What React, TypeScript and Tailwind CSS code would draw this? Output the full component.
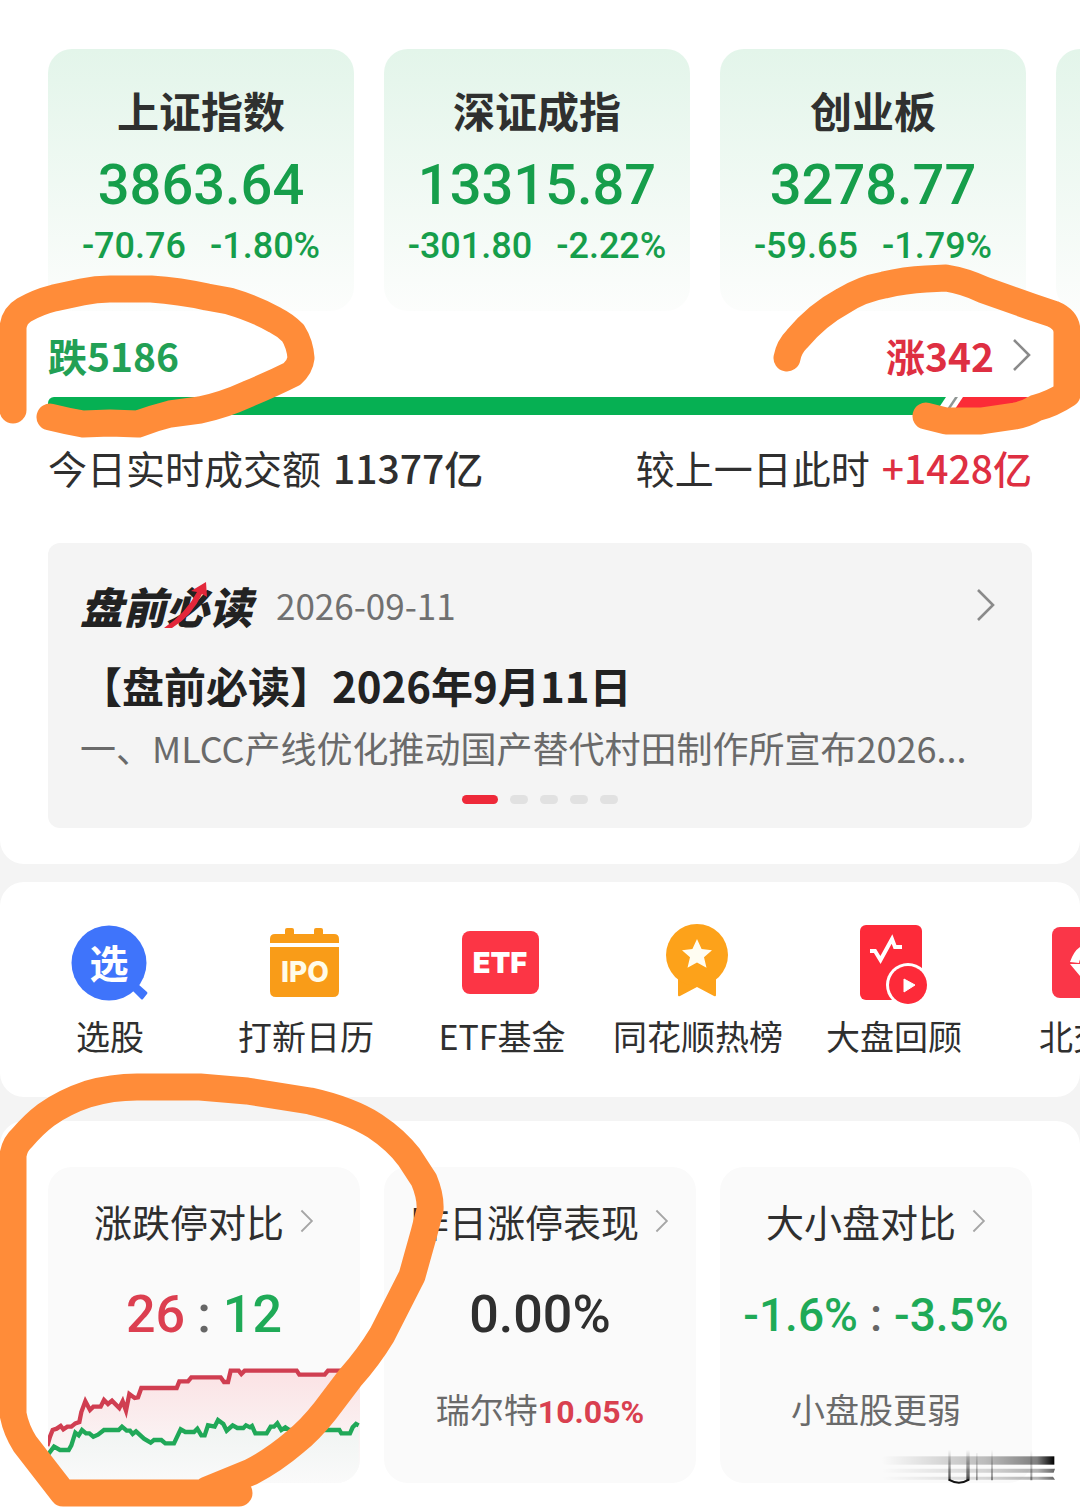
import React from 'react';

const indexes = [
  { name: '上证指数', value: '3863.64', change: '-70.76', percent: '-1.80%' },
  { name: '深证成指', value: '13315.87', change: '-301.80', percent: '-2.22%' },
  { name: '创业板', value: '3278.77', change: '-59.65', percent: '-1.79%' },
];

const Chevron: React.FC<{ className: string }> = ({ className }) => (
  <svg className={className} viewBox="0 0 20 34" fill="none" stroke="currentColor" strokeWidth="2.6" aria-hidden="true">
    <path d="M2 2l15 15L2 32" />
  </svg>
);

const IndexCards = () => (
  <div className="flex gap-[30px] overflow-hidden pl-12">
    {indexes.map((item) => (
      <a
        key={item.name}
        href="#"
        className="w-[306px] shrink-0 rounded-3xl bg-linear-to-b from-[#e3f5ea] to-[#fcfdfc] pt-8 pb-11 text-center text-[#169e4b]"
      >
        <div className="text-[42px] leading-[58px] font-bold text-[#2f302f]">{item.name}</div>
        <div className="mt-[6px] font-[Roboto,sans-serif] text-[56px] leading-[80px] font-medium">{item.value}</div>
        <div className="flex justify-center gap-6 font-[Roboto,sans-serif] text-[36px] leading-[42px] font-medium">
          <span>{item.change}</span>
          <span>{item.percent}</span>
        </div>
      </a>
    ))}
    <div className="w-[306px] shrink-0 rounded-3xl bg-linear-to-b from-[#e3f5ea] to-[#fcfdfc]" />
  </div>
);

const MarketBreadth = () => (
  <div className="px-12">
    <a href="#" className="mt-[18px] flex items-center justify-between text-[39px] leading-[52px] font-bold">
      <span className="text-[#22a055]">跌5186</span>
      <span className="flex items-center gap-[18px] text-[#de2f42]">
        涨342
        <Chevron className="h-[34px] w-5 text-[#8a8a8a]" />
      </span>
    </a>
    <div className="mt-4 flex h-[18px] overflow-hidden rounded-md">
      <div className="flex-1 bg-[#06b053]" />
      <svg className="h-[18px] w-7" viewBox="0 0 28 18" aria-hidden="true">
        <path d="M0 0h8L-4 18z" fill="#06b053" />
        <path d="M5 18L17 0h3L8 18z" fill="#909694" />
        <path d="M28 0v18H13L25 0z" fill="#fb2b37" />
      </svg>
      <div className="w-[66px] bg-[#fb2b37]" />
    </div>
    <div className="mt-6 flex justify-between text-[39px] leading-[56px] text-[#2f2f2f]">
      <p className="flex gap-3">
        今日实时成交额
        <span className="font-medium">11377亿</span>
      </p>
      <p className="flex gap-3">
        较上一日此时
        <span className="font-medium text-[#de2f42]">+1428亿</span>
      </p>
    </div>
  </div>
);

const NewsCard = () => (
  <a href="#" className="mx-12 mt-12 block rounded-xl bg-[#f4f4f4] px-8 pt-[30px] pb-6">
    <div className="flex h-16 items-center gap-6">
      <div className="relative text-[43px] font-black text-[#222] italic">
        盘前必读
        <svg className="absolute top-2 left-[84px] h-12 w-11" viewBox="0 0 44 48" aria-hidden="true">
          <path d="M0 47Q22 32 33 11l-6-1L42 1l1 15-5-3Q28 35 8 47z" fill="#e3273a" />
        </svg>
      </div>
      <span className="flex-1 text-[35px] text-[#707070]">2026-09-11</span>
      <Chevron className="mr-1 h-[34px] w-5 text-[#8a8a8a]" />
    </div>
    <h2 className="mt-5 text-[42px] leading-[56px] font-bold text-[#222]">【盘前必读】2026年9月11日</h2>
    <p className="mt-[6px] text-[36px] leading-[56px] whitespace-nowrap text-[#6a6a6a]">
      一、MLCC产线优化推动国产替代村田制作所宣布2026...
    </p>
    <div className="mt-5 flex justify-center gap-3">
      <span className="h-[9px] w-9 rounded-full bg-[#ee2939]" />
      <span className="h-[9px] w-[18px] rounded-full bg-[#e1e1e1]" />
      <span className="h-[9px] w-[18px] rounded-full bg-[#e1e1e1]" />
      <span className="h-[9px] w-[18px] rounded-full bg-[#e1e1e1]" />
      <span className="h-[9px] w-[18px] rounded-full bg-[#e1e1e1]" />
    </div>
  </a>
);

const tools = [
  {
    label: '选股',
    icon: (
      <>
        <circle cx="39" cy="41" r="37.500" fill="#3f74fb" />
        <path d="M62 68l6-6 9 8q1 1 0 2l-4 5q-1 1-2 0z" fill="#3f74fb" />
        <text x="39" y="56" textAnchor="middle" fontSize="39" fontWeight="bold" fill="#fff">选</text>
      </>
    ),
  },
  {
    label: '打新日历',
    icon: (
      <>
        <path d="M4 21v-4q0-5 5-5h10V8q0-2 2-2h5q2 0 2 2v4h20V8q0-2 2-2h5q2 0 2 2v4h11q5 0 5 5v4z" fill="#f99c18" />
        <path d="M4 25h69v44q0 6-6 6H10q-6 0-6-6z" fill="#f99c18" />
        <text x="39" y="60" textAnchor="middle" fontSize="28" fontWeight="800" fontFamily="Inter" fill="#fffbe8">IPO</text>
      </>
    ),
  },
  {
    label: 'ETF基金',
    icon: (
      <>
        <rect x="0" y="9" width="77" height="63" rx="8" fill="#fc3545" />
        <text x="38" y="51" textAnchor="middle" fontSize="29" fontWeight="900" fontFamily="Inter" fill="#fff">ETF</text>
      </>
    ),
  },
  {
    label: '同花顺热榜',
    icon: (
      <>
        <path d="M20 50h38v23q0 2-2 1L39 65 22 74q-2 1-2-1z" fill="#fda21a" />
        <circle cx="39" cy="33" r="31" fill="#fda21a" />
        <path d="M39 17l4.600 10 10.400 1.200-8 7 2.500 10.600-9.500-5.200-9.500 5.200 2.500-10.600-8-7L34.400 27z" fill="#fffdf2" />
      </>
    ),
  },
  {
    label: '大盘回顾',
    icon: (
      <>
        <rect x="6" y="3" width="62" height="75" rx="6" fill="#fd2a39" />
        <path d="M16 29h5l5.500 9L38 17l3 8h7" fill="none" stroke="#fff" strokeWidth="4" />
        <circle cx="54" cy="63" r="22" fill="#fff" />
        <circle cx="54" cy="63" r="19" fill="#fd2a39" />
        <path d="M50 57l11 6-11 7z" fill="#fff" stroke="#fff" strokeLinejoin="round" />
      </>
    ),
  },
  {
    label: '北交所',
    icon: (
      <>
        <rect x="2" y="5" width="76" height="71" rx="8" fill="#fa3648" />
        <path d="M40 22q-14 0-20 18l9 1q2-10 11-10zM20 42l20 24V42z" fill="#fff" />
      </>
    ),
  },
];

const ToolBar = () => (
  <nav className="mt-[18px] flex overflow-hidden rounded-3xl bg-white pt-10 pb-[37px] pl-3">
    {tools.map((tool) => (
      <a key={tool.label} href="#" className="flex w-[196px] shrink-0 flex-col items-center">
        <svg className="size-20 overflow-visible" viewBox="0 0 80 80" aria-hidden="true">
          {tool.icon}
        </svg>
        <span className="mt-[10px] text-[34px] leading-[48px] text-[#2f2f2f]">{tool.label}</span>
      </a>
    ))}
  </nav>
);

const RISE =
  'M22 288l8-28 8-20 12-4 12-8 8 10 12-8h12l12-10 12-4 6-30 12-32 14 26 10-10h22l10-20 12 12 12-10 22 22 10-20 10 28 10-50 16 12 10-2 10-28H410l8-20h26l10-12h88l10 14h12l8-34h24l8 10 10-10H770l8 12h76l10-12h96';
const FALL =
  'M22 316l20-26 18 10h26l8-14 12-38 10 8 10-16 12 10h10l12 10 14-6 18-14h44l10-10 14 12h10l8 10 10-8 24 22 20 12 10-8h22l12 10h26l20-42 14 8h26l10-10 12 20h10l10-30 20 4 10-20 16 12 10 20 18-16 14 8h18l8-8 12 6 6-4 10 22h34l12-20h10l10-10 12 20 12-8 12 8h150l6 10h26l8-18 10-10 8 4';

const LimitChart = () => (
  <svg className="mt-3 h-[124px] w-full" viewBox="24 27 936 372" preserveAspectRatio="none" aria-hidden="true">
    <defs>
      <linearGradient id="riseFill" x1="0" y1="0" x2="0" y2="1">
        <stop offset="0" stopColor="#fbe2e4" />
        <stop offset="0.900" stopColor="#fafafa" />
      </linearGradient>
      <linearGradient id="fallFill" x1="0" y1="0" x2="0" y2="1">
        <stop offset="0" stopColor="#eff3f1" />
        <stop offset="1" stopColor="#fafafa" />
      </linearGradient>
    </defs>
    <path d={`${RISE}V399H22z`} fill="url(#riseFill)" />
    <path d={`${FALL}V399H22z`} fill="url(#fallFill)" />
    <path d={RISE} fill="none" stroke="#d03e51" strokeWidth="13" />
    <path d={FALL} fill="none" stroke="#20a858" strokeWidth="13" />
  </svg>
);

const StatCard: React.FC<{ title: string; children: React.ReactNode }> = ({ title, children }) => (
  <a href="#" className="block overflow-hidden rounded-3xl bg-[#fafafa] pt-[30px] text-center">
    <div className="flex items-center justify-center gap-4 text-[38px] leading-[48px] text-[#2f2f2f]">
      {title}
      <Chevron className="h-6 w-[14px] text-[#a6a6a6]" />
    </div>
    {children}
  </a>
);

const Stats = () => (
  <section className="mt-6 grid grid-cols-3 gap-6 rounded-t-3xl bg-white px-12 pt-[46px] pb-6">
    <StatCard title="涨跌停对比">
      <div className="mt-[38px] flex justify-center gap-3 font-[Roboto,sans-serif] text-[52px] leading-[64px] font-medium">
        <span className="text-[#dc3f50]">26</span>
        <span className="text-[#666]">:</span>
        <span className="text-[#1faa57]">12</span>
      </div>
      <LimitChart />
    </StatCard>
    <StatCard title="昨日涨停表现">
      <div className="mt-[38px] font-[Roboto,sans-serif] text-[52px] leading-[64px] font-medium text-[#2f2f2f]">0.00%</div>
      <div className="mt-[38px] pb-[50px] text-[34px] leading-[48px] text-[#6a6a6a]">
        瑞尔特
        <span className="font-[Roboto,sans-serif] text-[32px] leading-none font-bold text-[#d9404f]">10.05%</span>
      </div>
    </StatCard>
    <StatCard title="大小盘对比">
      <div className="mt-[38px] flex justify-center gap-3 font-[Roboto,sans-serif] text-[46px] leading-[64px] font-medium text-[#1faa57]">
        <span>-1.6%</span>
        <span className="text-[#666]">:</span>
        <span>-3.5%</span>
      </div>
      <div className="mt-[38px] pb-[50px] text-[34px] leading-[48px] text-[#6a6a6a]">小盘股更弱</div>
    </StatCard>
  </section>
);

const Watermark = () => (
  <svg className="absolute right-5 bottom-5 h-[38px] w-[180px]" viewBox="60 60 540 114" aria-hidden="true">
    <defs>
      <linearGradient id="streak" x1="0" y1="0" x2="1" y2="0">
        <stop offset="0" stopColor="#000" stopOpacity="0" />
        <stop offset="0.600" stopColor="#000" stopOpacity="0.250" />
        <stop offset="0.900" stopColor="#000" stopOpacity="0.500" />
        <stop offset="1" stopColor="#000" />
      </linearGradient>
      <linearGradient id="post" x1="0" y1="0" x2="0" y2="1">
        <stop offset="0" stopColor="#000" stopOpacity="0" />
        <stop offset="1" stopColor="#000" stopOpacity="0.700" />
      </linearGradient>
    </defs>
    <rect x="65" y="82" width="518" height="25" fill="url(#streak)" />
    <path d="M65 119h520l-4 12H65zM65 143h514l6 9H65z" fill="url(#streak)" opacity="0.600" />
    <path d="M265 62h7v92h-7zM319 62h10v92h-10z" fill="url(#post)" />
    <path d="M348 72h5v82h-5zM393 62h6v92h-6zM511 62h6v92h-6z" fill="url(#post)" opacity="0.600" />
    <path d="M266 152q31 18 61 0" fill="none" stroke="#111" strokeWidth="6" />
  </svg>
);

const Scribbles = () => (
  <svg
    className="pointer-events-none absolute top-0 left-0 w-full"
    viewBox="0 0 1080 1507"
    fill="none"
    stroke="#ff8c39"
    strokeWidth="27"
    strokeLinecap="round"
    strokeLinejoin="round"
    aria-hidden="true"
  >
    <path d="M13 410V328Q14 316 24 310Q38 302 54 298L82 292Q96 289 110 289H151Q180 291 207 297L229 301Q256 309 275 320Q285 325 293 333Q300 344 301 358Q300 367 292 374Q272 384 248 394Q224 405 200 410L170 414Q154 418 138 424L110 423L83 424Q66 421 50 417" />
    <path d="M787 358Q789 347 797 339Q817 315 843 301Q862 289 884 285Q905 280 926 279L946 278Q965 281 984 290L1032 307L1053 314Q1067 320 1067 332V394Q1052 404 1036 408Q1026 414 1015 416L981 421H946L926 416" />
    <path d="M239 1493H63L25 1444Q16 1430 13 1414V1155Q15 1144 22 1138Q34 1124 46 1115Q64 1102 88 1094Q112 1087 137 1087H200L247 1091L310 1101Q350 1110 375 1126Q396 1140 409 1157L424 1180Q431 1197 430 1210Q424 1234 417 1258L412 1276L382 1335Q368 1358 350 1378L325 1411Q310 1430 295 1442Q274 1460 251 1472L207 1490" />
  </svg>
);

export default function App() {
  return (
    <div
      lang="zh-CN"
      className="relative overflow-hidden bg-[#f4f4f4] font-['Noto_Sans_CJK_SC',sans-serif]"
    >
      <main>
        <section className="rounded-b-3xl bg-white pt-[49px] pb-9">
          <IndexCards />
          <MarketBreadth />
          <NewsCard />
        </section>
        <ToolBar />
        <Stats />
      </main>
      <Watermark />
      <Scribbles />
    </div>
  );
}
